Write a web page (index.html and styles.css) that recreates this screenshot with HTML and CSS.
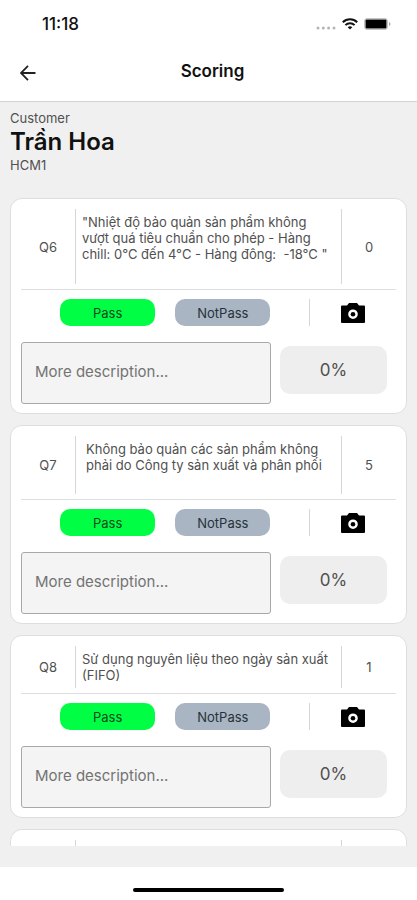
FILE: index.html
```html
<!DOCTYPE html>
<html lang="vi">
<head>
<meta charset="utf-8">
<meta name="viewport" content="width=device-width, initial-scale=1">
<title>Scoring</title>
<link rel="stylesheet" href="styles.css">
</head>
<body>
<svg class="sprite" aria-hidden="true">
  <symbol id="camera" viewBox="0 0 24 20">
    <path fill-rule="evenodd" d="M8 0h8l2 2.500h5a1 1 0 0 1 1 1v15.500a1 1 0 0 1-1 1h-22A1 1 0 0 1 0 19V3.500a1 1 0 0 1 1-1H6zM12 6.400a4.800 4.800 0 1 0 0 9.600a4.800 4.800 0 1 0 0-9.600z"/>
    <circle cx="12" cy="11.200" r="2.300"/>
  </symbol>
</svg>
<div class="status">
  <span class="time">11:18</span>
  <span class="indicators">
    <svg width="20" height="12" viewBox="0 0 20 12" fill="#b5b5b5"><circle cx="2" cy="10" r="1.500"/><circle cx="7.300" cy="10" r="1.500"/><circle cx="12.600" cy="10" r="1.500"/><circle cx="18" cy="10" r="1.500"/></svg>
    <svg width="16" height="12" viewBox="0 0 16 12" fill="none" stroke="#111" stroke-width="2"><path d="M.8 4.300a10.300 10.300 0 0 1 14.400 0M3.400 7.100a6.600 6.600 0 0 1 9.200 0"/><path d="M8 11.600L5.700 9.300a3.300 3.300 0 0 1 4.600 0z" fill="#111" stroke="none"/></svg>
    <svg width="27" height="12" viewBox="0 0 27 12"><rect x=".5" y=".5" width="23" height="11" rx="2.500" fill="#fff" stroke="#c4c4c4"/><rect x="1.500" y="1.500" width="21" height="9" rx="1"/><path d="M25 4v4c2-.8 2-3.200 0-4z" fill="#aaa"/></svg>
  </span>
</div>
<header class="header">
  <button class="back" type="button" aria-label="Back">
    <svg width="16" height="16" viewBox="0 0 16 16" fill="none" stroke="#222" stroke-width="1.800"><path d="M15.500 8H1.500M8 .8L.9 8L8 15.200"/></svg>
  </button>
  <h1>Scoring</h1>
</header>
<main class="main">
  <section class="customer">
    <p>Customer</p>
    <h2>Trần Hoa</h2>
    <p>HCM1</p>
  </section>
  <div class="list">
    <article class="card">
      <div class="question">
        <span class="code">Q6</span>
        <p class="text four">"Nhiệt độ bảo quản sản phẩm không<br>vượt quá tiêu chuẩn cho phép - Hàng<br>chill: 0°C đến 4°C - Hàng đông:&nbsp; -18°C "</p>
        <span class="score">0</span>
      </div>
      <div class="actions">
        <div class="choices"><button class="pass" type="button">Pass</button><button class="notpass" type="button">NotPass</button></div>
        <button class="photo" type="button" aria-label="Camera"><svg width="24" height="20"><use href="#camera"/></svg></button>
      </div>
      <div class="result">
        <input type="text" placeholder="More description..." aria-label="More description">
        <output>0%</output>
      </div>
    </article>
    <article class="card">
      <div class="question">
        <span class="code">Q7</span>
        <p class="text three">Không bảo quản các sản phẩm không<br>phải do Công ty sản xuất và phân phối</p>
        <span class="score">5</span>
      </div>
      <div class="actions">
        <div class="choices"><button class="pass" type="button">Pass</button><button class="notpass" type="button">NotPass</button></div>
        <button class="photo" type="button" aria-label="Camera"><svg width="24" height="20"><use href="#camera"/></svg></button>
      </div>
      <div class="result">
        <input type="text" placeholder="More description..." aria-label="More description">
        <output>0%</output>
      </div>
    </article>
    <article class="card">
      <div class="question">
        <span class="code">Q8</span>
        <p class="text">Sử dụng nguyên liệu theo ngày sản xuất<br>(FIFO)</p>
        <span class="score">1</span>
      </div>
      <div class="actions">
        <div class="choices"><button class="pass" type="button">Pass</button><button class="notpass" type="button">NotPass</button></div>
        <button class="photo" type="button" aria-label="Camera"><svg width="24" height="20"><use href="#camera"/></svg></button>
      </div>
      <div class="result">
        <input type="text" placeholder="More description..." aria-label="More description">
        <output>0%</output>
      </div>
    </article>
    <article class="card">
      <div class="question">
        <span class="code"></span>
        <p class="text"></p>
        <span class="score"></span>
      </div>
    </article>
  </div>
</main>
<footer class="home"><span></span></footer>
</body>
</html>
```
FILE: styles.css
```css
* { box-sizing: border-box; }
body {
  margin: 0;
  height: 100vh;
  display: flex;
  flex-direction: column;
  background: #fff;
  color: #505050;
  font: 13px/16px Inter, "Liberation Sans", sans-serif;
}
h1, h2, p { margin: 0; }
button { padding: 0; border: 0; background: none; font: inherit; color: inherit; }
svg { display: block; }
.sprite { position: absolute; width: 0; height: 0; }

.status {
  display: flex;
  justify-content: space-between;
  align-items: center;
  height: 48px;
  padding: 0 26px 0 42px;
}
.time { font-size: 17px; font-weight: 500; color: #111; }
.indicators { display: flex; gap: 6px; }

.header {
  display: grid;
  grid-template-columns: 56px 1fr 48px;
  align-items: center;
  height: 54px;
  padding-bottom: 8px;
  border-bottom: 1px solid #d2d2d2;
}
.back { display: flex; justify-content: center; padding-top: 4px; }
.header h1 { font-size: 17px; line-height: 20px; font-weight: 600; color: #111; text-align: center; }

.main {
  flex: 1;
  min-height: 0;
  display: flex;
  flex-direction: column;
  padding: 8px 10px 21px;
  background: #f0f0f0;
}
.customer { padding-bottom: 25px; }
.customer h2 { font-size: 24px; line-height: 31px; font-weight: 600; color: #111; }

.list {
  flex: 1;
  min-height: 0;
  display: flex;
  flex-direction: column;
  gap: 11px;
  overflow-y: auto;
  scrollbar-width: none;
}
.card {
  flex: none;
  padding: 10px 10px 9px;
  border: 1px solid #dedede;
  border-radius: 12px;
  background: #fff;
}
.question {
  display: grid;
  grid-template-columns: 54px 1fr 54px;
  padding-bottom: 5px;
  border-bottom: 1px solid #dedede;
}
.code, .score { display: flex; align-items: center; justify-content: center; }
.text {
  min-height: 42px;
  padding: 5px 6px;
  border: solid #d6d6d6;
  border-width: 0 1px;
  white-space: nowrap;
}
.text.three { min-height: 58px; padding-left: 10px; }
.text.four { min-height: 75px; }

.actions { display: grid; grid-template-columns: 10fr 3fr; margin: 9px 0 16px; }
.choices { display: flex; gap: 20px; padding: 0 39px; }
.choices button { flex: 1; height: 27px; border-radius: 10px; color: #26323a; }
.choices .pass { background: #00ff44; color: #0b4a1c; }
.choices .notpass { background: #a9b5c2; }
.photo { display: flex; align-items: center; justify-content: center; border-left: 1px solid #d6d6d6; color: #000; }

.result {
  display: grid;
  grid-template-columns: 7fr 3fr;
  gap: 9px;
  align-items: start;
  padding-right: 9px;
}
.result input {
  min-width: 0;
  height: 62px;
  padding: 0 13px 4px;
  border: 1px solid #a8a8a8;
  border-radius: 3px;
  background: #f4f4f4;
  font: inherit;
  font-size: 15px;
}
.result input::placeholder { color: #737373; }
.result output {
  height: 48px;
  margin-top: 4px;
  border-radius: 10px;
  background: #eee;
  font-size: 17px;
  line-height: 48px;
  text-align: center;
}

.home { display: flex; justify-content: center; height: 33px; padding-top: 21px; }
.home span { width: 36%; height: 4px; border-radius: 2px; background: #000; }
```
